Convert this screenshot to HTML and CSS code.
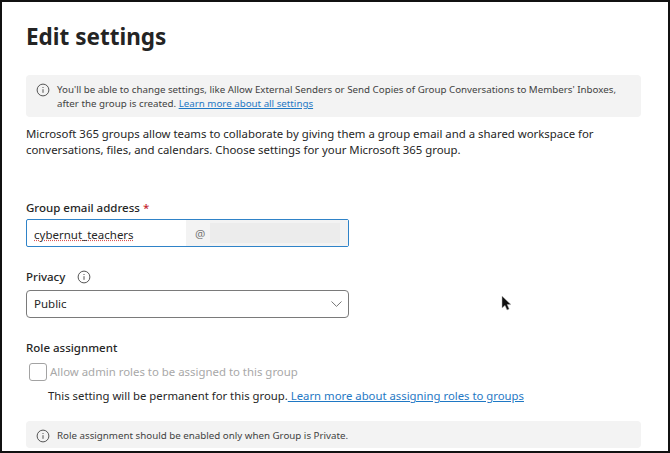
FILE: index.html
```html
<!DOCTYPE html>
<html lang="en">
<head>
    <meta charset="UTF-8">
    <meta name="viewport" content="width=device-width, initial-scale=1.0">
    <title>Edit settings</title>
    <link rel="stylesheet" href="styles.css">
</head>
<body>

<div class="frame">
    <h1>Edit settings</h1>

    <div class="notice notice-top">
        <svg class="info-icon" viewBox="0 0 14 14"><circle cx="7" cy="7" r="5.9"/><path d="M7 6.2v3.6M7 4v1"/></svg>
        <p>You'll be able to change settings, like Allow External Senders or Send Copies of Group Conversations to Members' Inboxes, after the group is created. <a href="#">Learn more about all settings</a></p>
    </div>

    <p class="intro">Microsoft 365 groups allow teams to collaborate by giving them a group email and a shared workspace for conversations, files, and calendars. Choose settings for your Microsoft 365 group.</p>

    <label class="field-label email-label">Group email address <span class="required">*</span></label>
    <div class="email-input">
        <span class="email-name">cybernut_teachers</span>
        <span class="email-domain">@<span class="blurred"></span></span>
    </div>

    <div class="field-label privacy-label">
        Privacy
        <svg class="info-icon" viewBox="0 0 14 14"><circle cx="7" cy="7" r="5.9"/><path d="M7 6.2v3.6M7 4v1"/></svg>
    </div>
    <div class="select">
        <span>Public</span>
        <svg class="chevron" viewBox="0 0 11 6"><path d="M.5.5 5.5 5.4 10.5.5"/></svg>
    </div>

    <div class="field-label role-label">Role assignment</div>
    <div class="check-row">
        <span class="checkbox"></span>
        <span>Allow admin roles to be assigned to this group</span>
    </div>
    <p class="permanent">This setting will be permanent for this group.<a href="#"> Learn more about assigning roles to groups</a></p>

    <div class="notice notice-bottom">
        <svg class="info-icon" viewBox="0 0 14 14"><circle cx="7" cy="7" r="5.9"/><path d="M7 6.2v3.6M7 4v1"/></svg>
        <p>Role assignment should be enabled only when Group is Private.</p>
    </div>

    <!-- mouse pointer caught in the screenshot -->
    <svg class="cursor" viewBox="0 0 10 16"><path d="M1 1v12l3-2.6L6 15l2.2-1-2-4.4H10z"/></svg>
</div>

</body>
</html>
```

FILE: styles.css
```css
html, body {
    margin: 0;
    padding: 0;
}

.frame {
    position: relative;
    box-sizing: border-box;
    width: 670px;
    height: 453px;
    padding: 0 27px 0 24px;
    overflow: hidden;
    background-color: #fff;
    border: 2px solid #111;
    font-family: "Noto Sans", sans-serif;
    color: #262626;
}

h1 {
    margin: 18px 0 0;
    font-size: 22.5px;
    line-height: 34px;
    font-weight: 700;
    color: #242424;
}

a {
    color: #1f78c4;
    text-decoration: underline;
}

.notice {
    display: flex;
    background-color: #f3f3f3;
    border-radius: 4px;
    font-size: 9.76px;
    line-height: 14px;
    color: #424242;
}

.notice p {
    margin: 0;
}

.notice-top {
    margin-top: 21px;
    padding: 8px 10px 6px 10px;
    height: 28px;
}

.notice-bottom {
    margin-top: 17px;
    height: 27px;
    padding: 8px 10px 0 10px;
    box-sizing: border-box;
}

.info-icon {
    flex: none;
    width: 14px;
    height: 14px;
    margin-right: 7px;
    fill: none;
    stroke: #555;
    stroke-width: 1;
}

.intro {
    margin: 9px 0 0;
    font-size: 11.38px;
    line-height: 16px;
}

.field-label {
    display: block;
    font-size: 11.5px;
    line-height: 16px;
    font-weight: 500;
}

.email-label {
    margin-top: 42px;
}

.required {
    color: #c4262e;
}

.email-input {
    display: flex;
    box-sizing: border-box;
    width: 323px;
    height: 28px;
    margin-top: 3px;
    border: 1px solid #2f83c8;
    border-radius: 2px;
    font-size: 11.5px;
    line-height: 28px;
}

.email-name {
    width: 152px;
    padding-left: 7px;
    padding-top: 1px;
    line-height: 27px;
    text-decoration: underline dotted #d9534f;
}

.email-domain {
    display: flex;
    flex: 1;
    padding-left: 9px;
    background-color: #f3f3f3;
    color: #777;
}

.blurred {
    width: 130px;
    height: 20px;
    margin: 3px 0 0 5px;
    background-color: #ececec;
}

.privacy-label {
    display: flex;
    align-items: center;
    margin-top: 22px;
}

.privacy-label .info-icon {
    margin: 0 0 0 12px;
}

.select {
    display: flex;
    align-items: center;
    justify-content: space-between;
    box-sizing: border-box;
    width: 323px;
    height: 28px;
    margin-top: 5px;
    padding: 0 6px 2px 7px;
    border: 1px solid #7a7a7a;
    border-radius: 4px;
    font-size: 11.5px;
}

.chevron {
    width: 11px;
    height: 6px;
    margin-top: 2px;
    fill: none;
    stroke: #777;
    stroke-width: 1;
}

.role-label {
    margin-top: 22px;
}

.check-row {
    display: flex;
    align-items: center;
    gap: 3px;
    margin: 7px 0 0 3px;
    font-size: 11.4px;
    line-height: 18px;
    color: #a8a8a8;
}

.checkbox {
    box-sizing: border-box;
    width: 18px;
    height: 18px;
    border: 1px solid #a3a3a3;
    border-radius: 3px;
}

.permanent {
    margin: 7px 0 0 22px;
    font-size: 11.33px;
    line-height: 16px;
}

.cursor {
    position: absolute;
    left: 499px;
    top: 293px;
    width: 10px;
    height: 16px;
    fill: #111;
    stroke: #bbb;
    stroke-width: 0.5;
}
```
